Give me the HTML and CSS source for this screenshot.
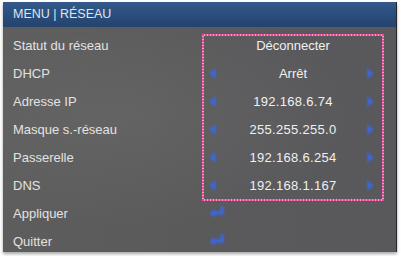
FILE: index.html
```html
<!DOCTYPE html>
<html>
<head>
<meta charset="utf-8">
<link rel="stylesheet" href="styles.css">
</head>
<body>
<div class="panel">
  <div class="header">MENU | RÉSEAU</div>
  <div class="menu">
    <div class="labels">
      <div class="label">Statut du réseau</div>
      <div class="label">DHCP</div>
      <div class="label">Adresse IP</div>
      <div class="label">Masque s.-réseau</div>
      <div class="label">Passerelle</div>
      <div class="label">DNS</div>
      <div class="label">Appliquer</div>
      <div class="label">Quitter</div>
    </div>
    <div class="values">
      <div class="sel">
        <div class="inner">
          <div class="value"><span class="text">Déconnecter</span></div>
          <div class="value"><svg class="arr" viewBox="0 0 7 12"><polygon points="6.5,0.5 0.5,6 6.5,11.5"/></svg><span class="text">Arrêt</span><svg class="arr" viewBox="0 0 7 12"><polygon points="0.5,0.5 6.5,6 0.5,11.5"/></svg></div>
          <div class="value"><svg class="arr" viewBox="0 0 7 12"><polygon points="6.5,0.5 0.5,6 6.5,11.5"/></svg><span class="text num">192.168.6.74</span><svg class="arr" viewBox="0 0 7 12"><polygon points="0.5,0.5 6.5,6 0.5,11.5"/></svg></div>
          <div class="value"><svg class="arr" viewBox="0 0 7 12"><polygon points="6.5,0.5 0.5,6 6.5,11.5"/></svg><span class="text num">255.255.255.0</span><svg class="arr" viewBox="0 0 7 12"><polygon points="0.5,0.5 6.5,6 0.5,11.5"/></svg></div>
          <div class="value"><svg class="arr" viewBox="0 0 7 12"><polygon points="6.5,0.5 0.5,6 6.5,11.5"/></svg><span class="text num">192.168.6.254</span><svg class="arr" viewBox="0 0 7 12"><polygon points="0.5,0.5 6.5,6 0.5,11.5"/></svg></div>
          <div class="value"><svg class="arr" viewBox="0 0 7 12"><polygon points="6.5,0.5 0.5,6 6.5,11.5"/></svg><span class="text num">192.168.1.167</span><svg class="arr" viewBox="0 0 7 12"><polygon points="0.5,0.5 6.5,6 0.5,11.5"/></svg></div>
        </div>
      </div>
      <div class="value after"><svg class="enter" viewBox="0 0 14 12"><path d="M11.5 1 V7 H4" /><polygon points="0.5,7 5,3 5,11"/></svg></div>
      <div class="value"><svg class="enter" viewBox="0 0 14 12"><path d="M11.5 1 V7 H4" /><polygon points="0.5,7 5,3 5,11"/></svg></div>
    </div>
  </div>
</div>
</body>
</html>
```
FILE: styles.css
```css
html, body {
  margin: 0;
  padding: 0;
  background: #ffffff;
}
body {
  width: 401px;
  height: 256px;
  overflow: hidden;
}
.panel {
  margin: 2px 0 0 3px;
  width: 393px;
  height: 250px;
  overflow: hidden;
  background:
    radial-gradient(ellipse at 30% 45%, rgba(255,255,255,0.05), rgba(0,0,0,0) 60%),
    linear-gradient(90deg, #5d5d5e 0%, #5a5a5b 50%, #59595b 100%);
  border-right: 1px solid #262626;
  box-shadow: 0 2px 3px rgba(0,0,0,0.35);
  font-family: "Liberation Sans", Arial, sans-serif;
}
.header {
  height: 25px;
  line-height: 25px;
  padding-left: 10px;
  font-size: 12.5px;
  color: #dfe6f0;
  background: linear-gradient(180deg, #34598a 0%, #2b4f7f 45%, #24436d 100%);
}
.menu {
  display: flex;
  padding-top: 4px;
}
.labels {
  width: 199px;
  display: flex;
  flex-direction: column;
}
.values {
  width: 182px;
  display: flex;
  flex-direction: column;
}
.sel {
  margin-top: 3px;
  height: 167px;
  background:
    repeating-linear-gradient(90deg, #e8489c 0 2px, #f39ac6 2px 3px) top left / 100% 2px no-repeat,
    repeating-linear-gradient(90deg, #e8489c 0 2px, #f39ac6 2px 3px) bottom left / 100% 2px no-repeat,
    repeating-linear-gradient(180deg, #e8489c 0 2px, #f39ac6 2px 3px) top left / 2px 100% no-repeat,
    repeating-linear-gradient(180deg, #e8489c 0 2px, #f39ac6 2px 3px) top right / 2px 100% no-repeat;
}
.inner {
  margin-top: -3px;
}
.after {
  margin-top: -3px;
}
.label {
  height: 28px;
  padding-left: 10px;
  display: flex;
  align-items: center;
  font-size: 13px;
  color: #e2e2e2;
}
.value {
  height: 28px;
  flex: none;
  display: flex;
  align-items: center;
  justify-content: space-between;
  padding: 0 10px 0 7px;
  position: relative;
  font-size: 13px;
  color: #f0f0f0;
}
.value .text {
  position: absolute;
  left: 0;
  right: 0;
  text-align: center;
}
.num {
  letter-spacing: 0.3px;
}
.arr {
  width: 7px;
  height: 13px;
  fill: #3a68e4;
  filter: blur(0.9px);
}
.enter {
  width: 16px;
  height: 14px;
  filter: blur(0.8px);
}
.enter path {
  fill: none;
  stroke: #3a68e4;
  stroke-width: 2.8;
}
.enter polygon {
  fill: #3a68e4;
}
```
